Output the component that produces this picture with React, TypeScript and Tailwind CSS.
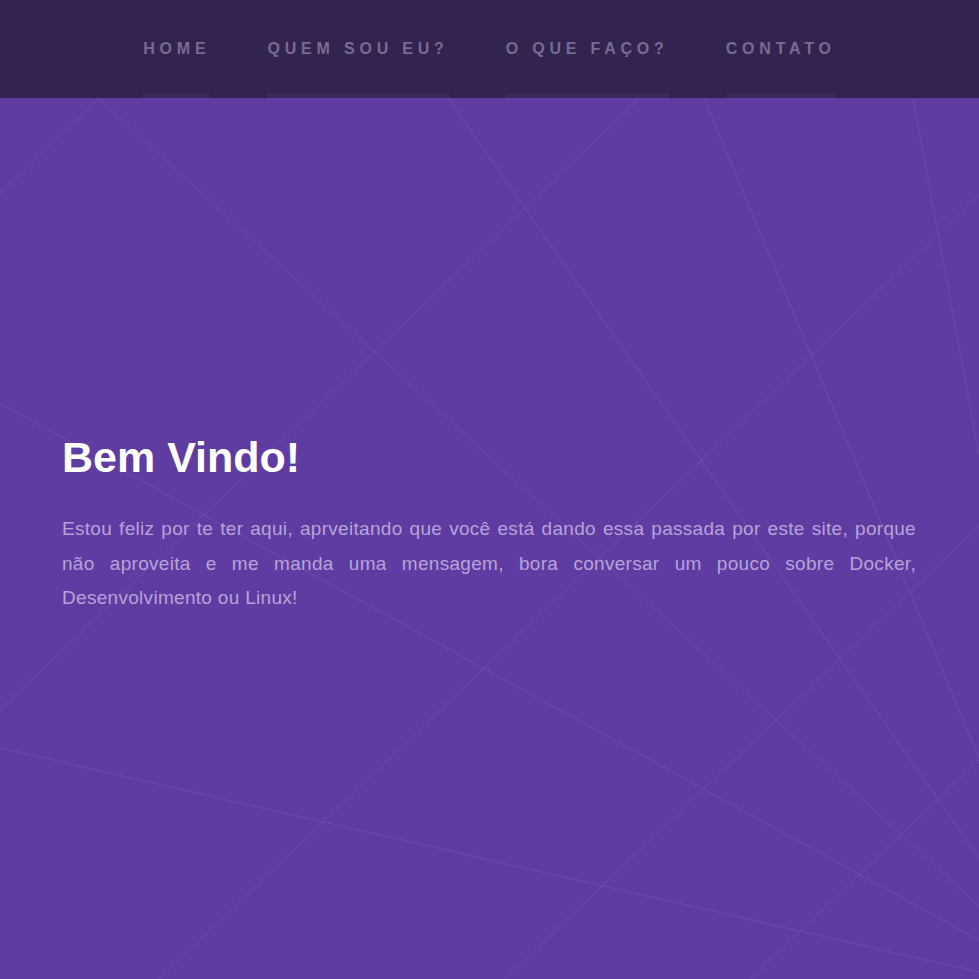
const navLinks = ['HOME', 'QUEM SOU EU?', 'O QUE FAÇO?', 'CONTATO'];

// background lines, in page coordinates (hero starts at y=98)
const lines: [number, number, number, number][] = [
  [98, 98, 979, 906],
  [0, 194, 98, 98],
  [640, 98, 0, 710],
  [448, 98, 979, 858],
  [704, 98, 979, 758],
  [913, 98, 979, 455],
  [979, 195, 159, 979],
  [0, 403, 979, 940],
  [979, 526, 505, 979],
  [979, 760, 750, 979],
  [0, 748, 979, 972],
];

function Navbar() {
  return (
    <nav className="h-[98px] bg-[#322350]">
      <ul className="flex justify-center gap-[57px]">
        {navLinks.map((link) => (
          <li key={link}>
            <a
              href="#"
              className="block pt-[37px] pb-[33px] border-b-4 border-[#3c2b60] rounded-t-[2px] text-[16px] leading-[24px] font-bold tracking-[0.3em] text-[#786b90]"
            >
              {link}
            </a>
          </li>
        ))}
      </ul>
    </nav>
  );
}

function Hero() {
  return (
    <section className="relative min-h-[881px] bg-[#5e3ca2] overflow-hidden">
      <svg
        className="absolute inset-0 w-full h-full"
        viewBox="0 98 979 881"
        preserveAspectRatio="none"
      >
        {lines.map(([x1, y1, x2, y2], i) => (
          <line key={i} x1={x1} y1={y1} x2={x2} y2={y2} stroke="#ffffff" strokeOpacity={0.09} strokeWidth={1} />
        ))}
      </svg>
      <div className="relative pl-[62px] pr-[63px] pt-[333px]">
        <h1 className="text-[43px] leading-[52px] font-bold text-white">Bem Vindo!</h1>
        <p className="mt-[29px] text-[19px] leading-[34.5px] tracking-[0.3px] text-justify text-[#b7a3da]">
          Estou feliz por te ter aqui, aprveitando que você está dando essa passada por este site, porque não
          aproveita e me manda uma mensagem, bora conversar um pouco sobre Docker, Desenvolvimento ou Linux!
        </p>
      </div>
    </section>
  );
}

export default function App() {
  return (
    <div className="font-['Liberation_Sans',Arial,sans-serif]">
      <Navbar />
      <Hero />
    </div>
  );
}
